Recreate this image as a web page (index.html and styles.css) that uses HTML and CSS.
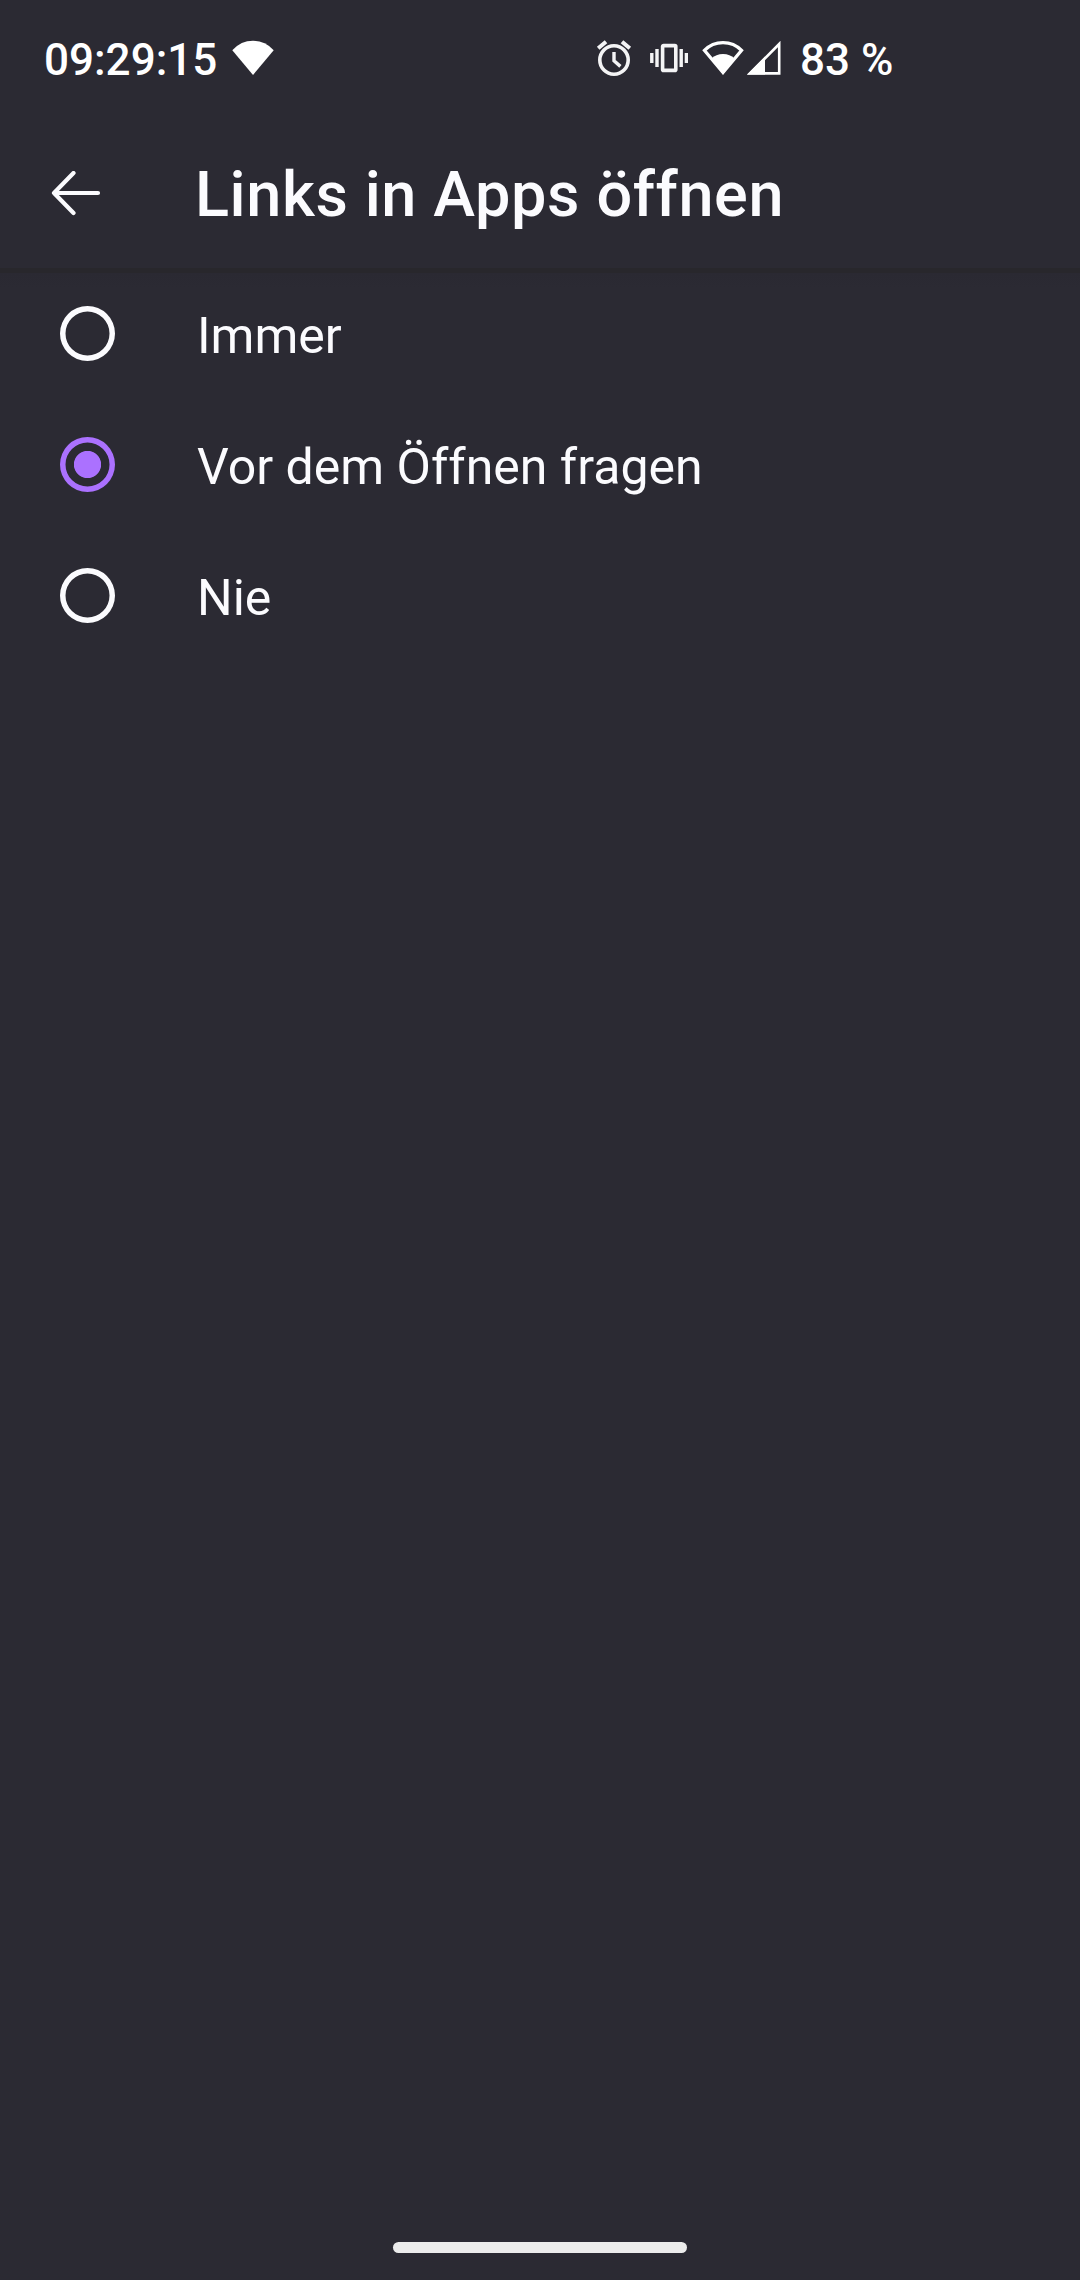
FILE: index.html
```
<!DOCTYPE html>
<html lang="de">

<head>
    <meta charset="UTF-8">
    <meta name="viewport" content="width=device-width, initial-scale=1.0">
    <title>Links in Apps öffnen</title>
    <link rel="stylesheet" href="styles.css">
</head>

<body>
    <div class="status">
        <span class="time">09:29:15</span>
        <svg class="wifi-full" width="42" height="36" viewBox="0 0 42 36">
            <path d="M0.3 10.2Q9 .8 21 .8T41.7 10.2L21 35z" fill="#fff" />
        </svg>
        <div class="status-right">
            <svg class="alarm" width="36" height="36" viewBox="0 0 36 36" fill="none" stroke="#f4f4f5">
                <circle cx="18" cy="20" r="14.2" stroke-width="3.6" />
                <path d="M2.2 8.3L10 1.8M33.8 8.3L26 1.8" stroke-width="4" />
                <path d="M18 12v8.8l6.4 5.6" stroke-width="3.4" />
            </svg>
            <svg class="vibrate" width="38" height="30" viewBox="0 0 38 30" fill="none" stroke="#f4f4f5">
                <rect x="12.6" y="2.6" width="13.2" height="24.8" rx="1" stroke-width="3.6" />
                <path d="M1.8 10v10M36.4 10v10M7 6v18M31.2 6v18" stroke-width="3.4" />
            </svg>
            <svg class="wifi" width="42" height="36" viewBox="0 0 42 36">
                <path d="M2.4 10.4Q10 2.6 21 2.6T39.6 10.4L21 32.6z" fill="none" stroke="#fff" stroke-width="3.2" />
                <path d="M9.5 18.5Q14 14 21 14T32.5 18.5L21 34.6z" fill="#fff" />
            </svg>
            <svg class="signal" width="36" height="36" viewBox="0 0 36 36">
                <path d="M33.2 4v29.4H4z" fill="none" stroke="#fff" stroke-width="2.6" />
                <path d="M1 34.6L19 16.6v18z" fill="#fff" />
            </svg>
            <span class="battery">83 %</span>
        </div>
    </div>
    <header class="toolbar">
        <svg class="back" width="50" height="46" viewBox="0 0 50 46">
            <path d="M22.5 2L3 22l19.5 20M3 22h44" fill="none" stroke="#fbfbfe" stroke-width="4.2" stroke-linecap="round" stroke-linejoin="round" />
        </svg>
        <h1 class="title">Links in Apps öffnen</h1>
    </header>
    <main class="options">
        <label class="option">
            <input class="radio" type="radio" name="links">
            <span>Immer</span>
        </label>
        <label class="option">
            <input class="radio" type="radio" name="links" checked>
            <span>Vor dem Öffnen fragen</span>
        </label>
        <label class="option">
            <input class="radio" type="radio" name="links">
            <span>Nie</span>
        </label>
    </main>
    <footer class="navbar">
        <div class="handle"></div>
    </footer>
</body>

</html>
```

FILE: styles.css
```
html,
body {
    margin: 0;
    padding: 0;
    height: 100%;
}

body {
    display: flex;
    flex-direction: column;
    overflow: hidden;
    font-family: Roboto, sans-serif;
    color: #fbfbfe;
    background-color: #2b2a33;
}

/* status bar */
.status {
    display: flex;
    align-items: flex-start;
    box-sizing: border-box;
    height: 120px;
    padding: 40px 180px 0 44px;
    font-size: 44px;
    font-weight: 500;
    line-height: 40px;
    color: #fff;
}

.status svg {
    flex: none;
}

.time {
    width: 188px;
    white-space: nowrap;
}

.status-right {
    display: flex;
    align-items: flex-start;
    margin-left: 322px;
}

.alarm {
    margin-right: 18px;
}

.vibrate {
    margin: 3px 14px 0 0;
}

.wifi {
    margin-right: 2px;
}

.battery {
    margin-left: 18px;
    white-space: nowrap;
}

/* toolbar */
.toolbar {
    display: flex;
    align-items: center;
    box-sizing: border-box;
    height: 148px;
    padding: 0 51px;
}

.back {
    flex: none;
    margin-right: 94px;
}

.title {
    margin: 0;
    padding-top: 2px;
    font-size: 63px;
    font-weight: 500;
    line-height: 74px;
    letter-spacing: .6px;
    white-space: nowrap;
}

/* options */
.options {
    flex: 1;
    background-image: linear-gradient(to bottom, #28272c 5px, #2a2932 5px, #2b2a33 20px);
}

.option {
    display: flex;
    align-items: center;
    height: 131px;
    padding-left: 60px;
    font-size: 50px;
}

.option span {
    padding-top: 4px;
}

.radio {
    appearance: none;
    flex: none;
    width: 55px;
    height: 55px;
    margin: 0 82px 0 0;
    border-radius: 50%;
    box-shadow: inset 0 0 0 5.5px #fbfbfe;
}

.radio:checked {
    box-shadow: inset 0 0 0 5.5px #ab71ff;
    background-image: radial-gradient(circle, #ab71ff 13.2px, transparent 14px);
}

/* gesture bar */
.navbar {
    display: flex;
    justify-content: center;
    height: 38px;
}

.handle {
    width: 294px;
    height: 11px;
    border-radius: 6px;
    background-color: #ececec;
}
```
